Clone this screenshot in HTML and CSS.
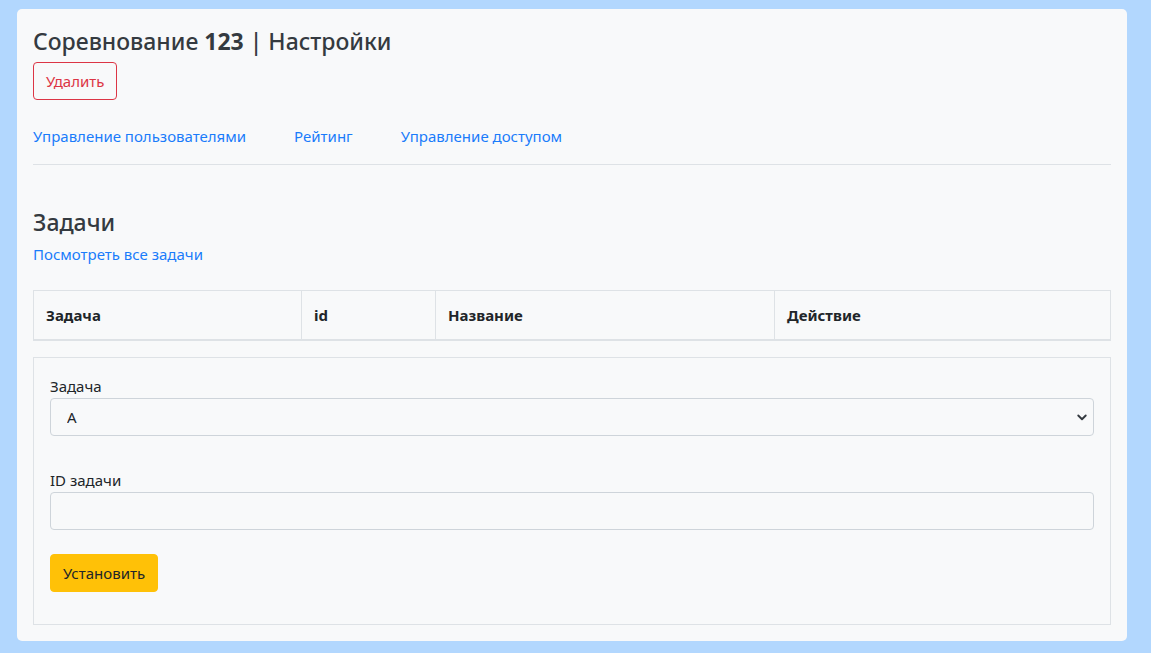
FILE: index.html
```html
<!DOCTYPE html>
<html lang="ru">
<head>
<meta charset="utf-8">
<title>Соревнование 123 | Настройки</title>
<link rel="stylesheet" href="styles.css">
</head>
<body>
<main class="card">
  <h1 class="title">Соревнование <b>123</b> | Настройки</h1>
  <button class="btn btn-outline-danger">Удалить</button>
  <nav class="tabs">
    <a href="#" class="tab">Управление пользователями</a>
    <a href="#" class="tab">Рейтинг</a>
    <a href="#" class="tab">Управление доступом</a>
  </nav>
  <hr class="divider">
  <h2 class="section-title">Задачи</h2>
  <a href="#" class="link">Посмотреть все задачи</a>
  <table class="table">
    <thead>
      <tr>
        <th class="c1">Задача</th>
        <th class="c2">id</th>
        <th class="c3">Название</th>
        <th class="c4">Действие</th>
      </tr>
    </thead>
  </table>
  <form class="form-box">
    <label class="label" for="task">Задача</label>
    <select id="task" class="control select"><option>A</option></select>
    <label class="label" for="tid">ID задачи</label>
    <input id="tid" class="control" type="text">
    <button type="button" class="btn btn-warning">Установить</button>
  </form>
</main>
</body>
</html>
```

FILE: styles.css
```css
* { box-sizing: border-box; }
html, body { margin: 0; }
body {
  background: #b2d7fe;
  font-family: "Noto Sans", "Open Sans", sans-serif;
  font-size: 15px;
  color: #212529;
  padding: 9px 24px 12px 17px;
}
.card {
  background: #f8f9fa;
  border-radius: 5px;
  padding: 16px;
  display: flex;
  flex-direction: column;
  align-items: flex-start;
}
.title {
  font-size: 23px;
  font-weight: 500;
  color: #343a40;
  line-height: 32px;
  margin: 0 0 5px;
}
.title b { font-weight: 700; }
.btn {
  font-family: inherit;
  font-size: 15px;
  line-height: 24px;
  padding: 6px 12px;
  border-radius: 4px;
  border: 1px solid transparent;
  cursor: pointer;
}
.btn-outline-danger {
  background: transparent;
  color: #dc3545;
  border-color: #dc3545;
}
.btn-warning {
  background: #ffc107;
  border-color: #ffc107;
  color: #212529;
  margin-top: -8px;
  margin-bottom: 16px;
}
.tabs {
  display: flex;
  gap: 48px;
  margin-top: 24px;
  line-height: 24px;
}
.tab, .link {
  color: #1a7cfb;
  text-decoration: none;
}
.divider {
  align-self: stretch;
  border: 0;
  border-top: 1px solid #dee2e6;
  margin: 16px 0 0;
}
.section-title {
  font-size: 23px;
  font-weight: 500;
  color: #343a40;
  line-height: 30px;
  margin: 42px 0 5px;
}
.link { line-height: 24px; }
.table {
  align-self: stretch;
  border-collapse: collapse;
  margin-top: 24px;
  table-layout: fixed;
  width: 100%;
}
.table th {
  text-align: left;
  font-weight: 700;
  padding: 12px 12px;
  line-height: 24px;
  border: 1px solid #dee2e6;
  border-bottom: 2px solid #dee2e6;
}
.c1 { width: 268px; }
.c2 { width: 134px; }
.c3 { width: 339px; }
.form-box {
  align-self: stretch;
  margin-top: 16px;
  border: 1px solid #dee2e6;
  padding: 16px;
  display: flex;
  flex-direction: column;
  align-items: flex-start;
}
.label {
  line-height: 24px;
}
.control {
  align-self: stretch;
  height: 38px;
  font-family: inherit;
  font-size: 15px;
  color: #212529;
  background: #f8f9fa;
  border: 1px solid #ced4da;
  border-radius: 4px;
  padding: 6px 16px;
  margin-bottom: 32px;
}
.select {
  appearance: none;
  -webkit-appearance: none;
  background-image: url("data:image/svg+xml,%3Csvg xmlns='http://www.w3.org/2000/svg' viewBox='0 0 16 16'%3E%3Cpath fill='none' stroke='%23343a40' stroke-linecap='round' stroke-linejoin='round' stroke-width='2.5' d='M3 6l5 5 5-5'/%3E%3C/svg%3E");
  background-repeat: no-repeat;
  background-position: right 5px center;
  background-size: 12px 12px;
}
```
